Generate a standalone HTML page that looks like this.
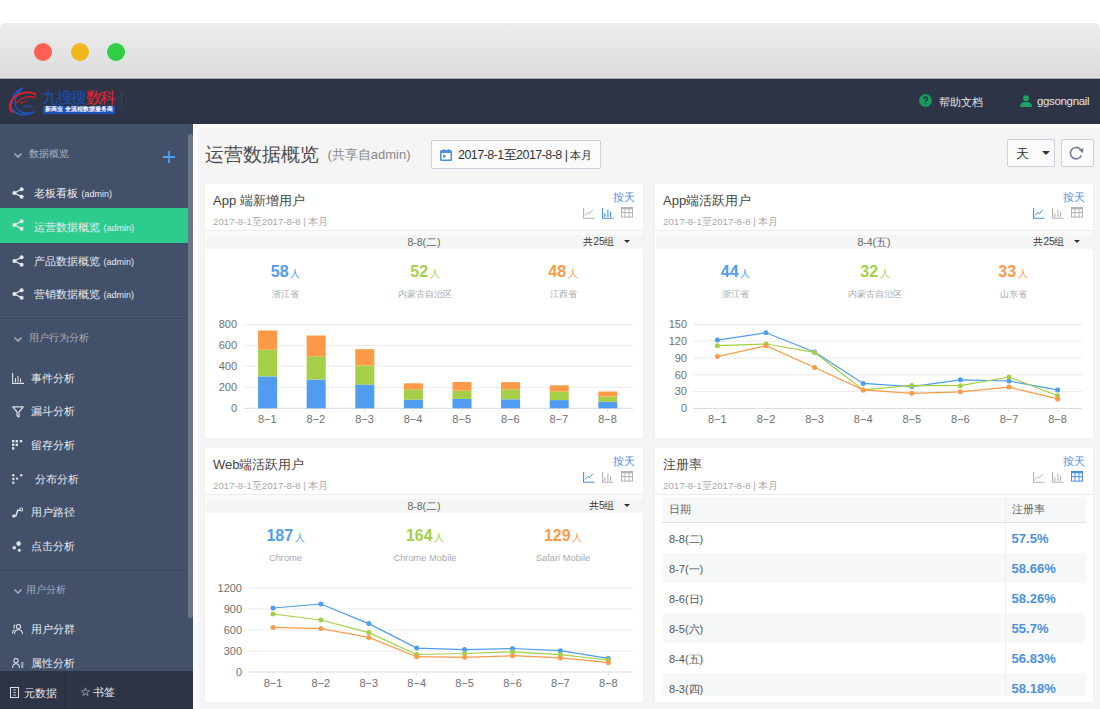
<!DOCTYPE html>
<html><head><meta charset="utf-8">
<style>
*{margin:0;padding:0;box-sizing:border-box}
html,body{width:1100px;height:709px;overflow:hidden;background:#fff;font-family:"Liberation Sans",sans-serif;position:relative}
.abs{position:absolute}
#titlebar{position:absolute;left:0;top:23px;width:1100px;height:56px;background:linear-gradient(#ededed,#dbdcdb calc(100% - 2px),#eeeeee calc(100% - 2px),#eeeeee calc(100% - 1px),#9a9ea6 calc(100% - 1px));border-radius:5px 5px 0 0}
.tl{position:absolute;top:43.3px;width:18px;height:18px;border-radius:50%}
#header{position:absolute;left:0;top:79px;width:1100px;height:44px;background:#2c3446}
#sidebar{position:absolute;left:0;top:123px;width:193px;height:586px;background:#435069;overflow:hidden}
#main{position:absolute;left:193px;top:123px;width:907px;height:586px;background:#f5f5f5;box-shadow:inset 5px 5px 0 #fbfbfb}
.sec{position:absolute;left:28.6px;font-size:9.5px;color:#a9b1c0;font-weight:500;line-height:12px}
.chev{position:absolute;left:13.5px;width:8px;height:5px}
.item{position:absolute;left:0;width:188px;height:35px;color:#e8ebf0;font-size:11px;line-height:35px;font-weight:500}
.item .t{position:absolute;left:34.4px;top:0;white-space:nowrap}
.item .t small{font-size:9px;margin-left:3px}
.item svg{position:absolute;left:12px;top:11px}
.item2 .t{left:31px}
.divider{position:absolute;left:0;width:188px;height:2px;border-top:1px solid #3d485e;background:#47546d}
.card{position:absolute;width:438px;height:254px;background:#fff;box-shadow:0 0 0 1px #f1f1f1}
.ctitle{position:absolute;font-size:13px;color:#444;line-height:16px;white-space:nowrap}
.csub{position:absolute;font-size:9.7px;color:#aaa;line-height:13px;white-space:nowrap}
.cline{position:absolute;width:438px;height:1px;background:#ececec}
.byday{position:absolute;font-size:11px;color:#4a90e2;line-height:14px;width:22px;text-align:right;white-space:nowrap}
.ic{position:absolute}
.band{position:absolute;width:437px;height:18px;background:linear-gradient(#fafafa 0,#fafafa 4px,#f5f5f5 4px)}
.bdate{position:absolute;width:438px;text-align:center;font-size:10.5px;color:#666;line-height:14px}
.bgrp{position:absolute;width:114px;text-align:right;font-size:10px;color:#3a3a3a;line-height:14px;letter-spacing:0px}
.caret{position:absolute;width:0;height:0;border-left:3px solid transparent;border-right:3px solid transparent;border-top:3px solid #333}
.stat{position:absolute;width:140px;text-align:center;line-height:18px;white-space:nowrap}
.stat b{font-size:16px;font-weight:bold}
.stat span{font-size:10px;margin-left:1.5px}
.slab{position:absolute;width:140px;text-align:center;font-size:9.3px;color:#aaa;line-height:12px;white-space:nowrap}
.chart{position:absolute;left:0;top:0;pointer-events:none}
.yl{font-family:"Liberation Sans",sans-serif;font-size:11px;fill:#707070}
.xl{font-family:"Liberation Sans",sans-serif;font-size:11px;fill:#707070}
.tbl{position:absolute;left:662px;top:496.5px;width:424px;height:199.5px;overflow:hidden}
.th{position:relative;height:26px;background:#f7f8fa;border-bottom:1px solid #dfe2e6;font-size:10.5px;color:#666;line-height:25px}
.tr{position:relative;height:30.2px;background:#fff;font-size:11px;color:#555;line-height:32px}
.tr.odd{background:#f7f8fa}
.c1{position:absolute;left:7px;top:0}
.c2{position:absolute;left:349.6px;top:0}
.th .c2{left:349.6px}
.tr .c2{color:#4a90e2;font-weight:bold;font-size:13px}
.vsep{position:absolute;left:1005px;top:496.5px;width:1px;height:199.5px;background:#eceef1}
</style></head><body>
<div id="titlebar"></div>
<div class="tl" style="left:34.2px;background:#fd5f57"></div>
<div class="tl" style="left:70.8px;background:#f2b71b"></div>
<div class="tl" style="left:107.2px;background:#2fce43"></div>

<div id="header">
  <svg class="abs" style="left:4px;top:5px" width="40" height="36" viewBox="0 0 40 36">
    <path d="M19.3 3.6 C11 8 5.5 16 7.5 23.5 C9.5 30.5 20 33 30.5 27.7" stroke="#2255c8" stroke-width="1.6" fill="none"/>
    <path d="M18 5.6 C12 10 9.5 18 12.5 24 C15 28.5 21 29.5 25 28.5" stroke="#2255c8" stroke-width="1.2" fill="none"/>
    <path d="M16.5 4.2 C10 8.5 7.5 15 8.5 20" stroke="#2255c8" stroke-width="0.9" fill="none"/>
    <path d="M32.5 10.7 C26 6.5 15 8 9 15 C4.5 20.5 4.5 25.5 9 28.5" stroke="#ee1c25" stroke-width="1.9" fill="none"/>
    <path d="M31.8 13.5 C25 11.5 17 13 12.5 19.5" stroke="#ee1c25" stroke-width="1.1" fill="none"/>
    <path d="M22.8 17.8 C20 17.5 17.5 18.5 16 19.5" stroke="#ee1c25" stroke-width="0.9" fill="none"/>
    <text x="19.5" y="23.8" font-size="3.6" fill="#2255c8" font-weight="bold" font-style="italic" font-family="Liberation Serif">DATA</text>
  </svg>
  <div class="abs" style="left:42px;top:10px;font-size:16px;line-height:18px;white-space:nowrap;letter-spacing:-1.5px;font-weight:500"><span style="color:#1a50b8">九搜搜</span><span style="color:#e5262d">数科</span></div>
  <div class="abs" style="left:43px;top:27px;width:72px;height:7.5px;background:#1a50b8;color:#fff;font-size:6px;line-height:7.5px;font-weight:bold;white-space:nowrap;overflow:hidden;padding-left:2px">新商业 全流程数据服务商</div>
  <div class="abs" style="left:121px;top:13px;width:1px;height:18px;background:#3a4255"></div>
  <svg class="abs" style="left:919px;top:14.6px" width="13" height="13" viewBox="0 0 13 13"><circle cx="6.5" cy="6.5" r="6.5" fill="#15995c"/><path d="M4.6 5 C4.6 3.6 5.5 3 6.5 3 C7.6 3 8.4 3.7 8.4 4.7 C8.4 5.8 7 6 6.7 7 V7.8" stroke="#2c3446" stroke-width="1.3" fill="none"/><circle cx="6.6" cy="9.6" r="0.8" fill="#2c3446"/></svg>
  <div class="abs" style="left:938.5px;top:15.5px;font-size:11px;line-height:14px;color:#e2e5ea;white-space:nowrap;font-weight:500">帮助文档</div>
  <svg class="abs" style="left:1020px;top:15.5px" width="12" height="12" viewBox="0 0 12 12"><circle cx="6" cy="3.2" r="3" fill="#1ea162"/><path d="M0 12 C0 8 2.5 7 6 7 C9.5 7 12 8 12 12 Z" fill="#1ea162"/></svg>
  <div class="abs" style="left:1037px;top:14.5px;font-size:11.5px;line-height:14px;color:#e2e5ea;white-space:nowrap;letter-spacing:-0.35px">ggsongnail</div>
</div>

<div id="sidebar">
  <!-- coordinates relative to top 123 -->
  <svg class="chev" style="top:30px" viewBox="0 0 8 5"><path d="M0.5 0.5L4 4L7.5 0.5" stroke="#a9b1c0" stroke-width="1.5" fill="none"/></svg>
  <div class="sec" style="top:25px">数据概览</div>
  <svg class="abs" style="left:163px;top:28px" width="12" height="12" viewBox="0 0 12 12"><path d="M6 0V12M0 6H12" stroke="#4aa0f5" stroke-width="1.8"/></svg>
  <div class="scroll abs" style="left:188px;top:11px;width:5px;height:484px;background:#6d7688;border-radius:2.5px"></div>
  <div class="item" style="top:53px;"><svg style="top:11px" width="12" height="12" viewBox="0 0 12 12"><path d="M9.5 2.2L2.5 6L9.5 9.8" stroke="#e6e9ee" stroke-width="1.3" fill="none"/><circle cx="9.6" cy="2.2" r="2" fill="#e6e9ee"/><circle cx="2.4" cy="6" r="2" fill="#e6e9ee"/><circle cx="9.6" cy="9.8" r="2" fill="#e6e9ee"/></svg><div class="t">老板看板<small>(admin)</small></div></div><div class="item" style="top:85px;background:#2ecb8f;"><svg style="top:11px" width="12" height="12" viewBox="0 0 12 12"><path d="M9.5 2.2L2.5 6L9.5 9.8" stroke="#e6e9ee" stroke-width="1.3" fill="none"/><circle cx="9.6" cy="2.2" r="2" fill="#e6e9ee"/><circle cx="2.4" cy="6" r="2" fill="#e6e9ee"/><circle cx="9.6" cy="9.8" r="2" fill="#e6e9ee"/></svg><div class="t" style="top:1.5px">运营数据概览<small>(admin)</small></div></div><div class="item" style="top:120.5px;"><svg style="top:11px" width="12" height="12" viewBox="0 0 12 12"><path d="M9.5 2.2L2.5 6L9.5 9.8" stroke="#e6e9ee" stroke-width="1.3" fill="none"/><circle cx="9.6" cy="2.2" r="2" fill="#e6e9ee"/><circle cx="2.4" cy="6" r="2" fill="#e6e9ee"/><circle cx="9.6" cy="9.8" r="2" fill="#e6e9ee"/></svg><div class="t">产品数据概览<small>(admin)</small></div></div><div class="item" style="top:154px;"><svg style="top:11px" width="12" height="12" viewBox="0 0 12 12"><path d="M9.5 2.2L2.5 6L9.5 9.8" stroke="#e6e9ee" stroke-width="1.3" fill="none"/><circle cx="9.6" cy="2.2" r="2" fill="#e6e9ee"/><circle cx="2.4" cy="6" r="2" fill="#e6e9ee"/><circle cx="9.6" cy="9.8" r="2" fill="#e6e9ee"/></svg><div class="t">营销数据概览<small>(admin)</small></div></div><div class="divider" style="top:194.5px"></div><svg class="chev" style="top:214px" viewBox="0 0 8 5"><path d="M0.5 0.5L4 4L7.5 0.5" stroke="#a9b1c0" stroke-width="1.5" fill="none"/></svg><div class="sec" style="top:209px">用户行为分析</div><div class="item item2" style="top:237.7px"><svg style="top:12px" width="12" height="11" viewBox="0 0 12 11"><path d="M0.6 0V10.4H12" stroke="#dde1e7" stroke-width="1.1" fill="none"/><path d="M3.5 5V9M6 3V9M8.5 5.5V9" stroke="#dde1e7" stroke-width="1" fill="none"/></svg><div class="t" style="left:31px">事件分析</div></div><div class="item item2" style="top:271px"><svg style="top:12px" width="12" height="12" viewBox="0 0 12 12"><path d="M0.8 0.8H11.2L7 6V11L5 9.8V6Z" stroke="#dde1e7" stroke-width="1.2" fill="none" stroke-linejoin="round"/></svg><div class="t" style="left:31px">漏斗分析</div></div><div class="item item2" style="top:304.8px"><svg style="top:12px" width="11" height="10" viewBox="0 0 11 10"><g fill="#dde1e7"><rect x="0" y="0" width="2.4" height="2.4"/><rect x="3.6" y="0" width="2.4" height="2.4"/><rect x="7.8" y="0" width="2.4" height="2.4"/><rect x="0" y="3.6" width="2.4" height="2.4"/><rect x="3.6" y="3.6" width="2.4" height="2.4"/><rect x="0" y="7.2" width="2.4" height="2.4"/></g></svg><div class="t" style="left:31px">留存分析</div></div><div class="item item2" style="top:338.7px"><svg style="top:12px" width="11" height="10" viewBox="0 0 11 10"><g fill="#dde1e7"><circle cx="1.3" cy="1.3" r="1.2"/><circle cx="9.2" cy="1.3" r="1.2"/><circle cx="1.3" cy="5" r="1.2"/><circle cx="5" cy="4.6" r="1.2"/><circle cx="1.3" cy="8.7" r="1.2"/></g></svg><div class="t" style="left:35px">分布分析</div></div><div class="item item2" style="top:372.4px"><svg style="top:12px" width="11" height="11" viewBox="0 0 11 11"><path d="M1.8 9H3.8L5.8 3.2H8.3" stroke="#dde1e7" stroke-width="1.5" fill="none"/><rect x="0.3" y="7.6" width="2.8" height="2.8" fill="#dde1e7"/><circle cx="9.3" cy="2.5" r="1.5" fill="none" stroke="#dde1e7" stroke-width="1.1"/></svg><div class="t" style="left:31px">用户路径</div></div><div class="item item2" style="top:405.7px"><svg style="top:12px" width="11" height="11" viewBox="0 0 11 11"><g fill="#dde1e7"><circle cx="6.6" cy="2.6" r="2.3"/><circle cx="2.2" cy="6.8" r="1.8"/><circle cx="7.3" cy="9.2" r="1.5"/></g></svg><div class="t" style="left:31px">点击分析</div></div><div class="divider" style="top:447px"></div><svg class="chev" style="top:466px" viewBox="0 0 8 5"><path d="M0.5 0.5L4 4L7.5 0.5" stroke="#a9b1c0" stroke-width="1.5" fill="none"/></svg><div class="sec" style="top:461px;left:25.5px">用户分析</div><div class="item item2" style="top:489.2px"><svg style="top:12px" width="11" height="10" viewBox="0 0 11 10"><g stroke="#dde1e7" stroke-width="1.1" fill="none"><circle cx="6.5" cy="2.6" r="2.1"/><path d="M2.5 10C2.5 7 4.5 5.7 6.5 5.7S10.5 7 10.5 10"/><path d="M3.2 0.8A2 2 0 0 0 2.6 4.3M0.5 9.5C0.5 7 1.3 6.1 2.3 5.7"/></g></svg><div class="t" style="left:31px">用户分群</div></div><div class="item item2" style="top:522.8px"><svg style="top:12px" width="12" height="10" viewBox="0 0 12 10"><g stroke="#dde1e7" stroke-width="1.1" fill="none"><circle cx="4" cy="2.6" r="2.1"/><path d="M0.6 10C0.6 7 2 5.7 4 5.7S7.4 7 7.4 10"/><path d="M9 5H11.5M9 7H11.5M9 9H11.5"/></g></svg><div class="t" style="left:31px">属性分析</div></div>
</div>
<div class="abs" style="left:0;top:671px;width:193px;height:38px;background:#2d3446"></div>
<svg class="abs" style="left:10px;top:687px" width="9" height="11" viewBox="0 0 9 11"><rect x="0.5" y="0.5" width="8" height="10" fill="none" stroke="#dde1e7" stroke-width="1"/><path d="M3 3H6M3 5.5H6M3 8H6" stroke="#dde1e7" stroke-width="0.8"/></svg>
<div class="abs" style="left:23.5px;top:685.5px;font-size:11px;font-weight:500;line-height:14px;color:#e6e9ee;white-space:nowrap">元数据</div>
<div class="abs" style="left:65px;top:671px;width:1px;height:38px;background:#262d3c"></div>
<div class="abs" style="left:80px;top:685px;font-size:12px;line-height:14px;color:#e6e9ee;white-space:nowrap;font-weight:500">☆<span style="font-size:11px;margin-left:2px">书签</span></div>

<div id="main"></div>
<div class="abs" style="left:0;top:123px;width:1100px;height:1px;background:#29313f"></div>
<div class="abs" style="left:0;top:124px;width:188px;height:2px;background:#46536e"></div>
<div class="abs" style="left:205px;top:143.5px;font-size:19px;line-height:22px;color:#4d4d4d;white-space:nowrap">运营数据概览</div>
<div class="abs" style="left:327.5px;top:146.5px;font-size:13px;line-height:16px;color:#888;white-space:nowrap">(共享自admin)</div>
<div class="abs" style="left:431px;top:140px;width:170px;height:29px;border:1px solid #c9d1dc;border-radius:2px;background:#fbfbfc"></div>
<svg class="abs" style="left:440px;top:149px" width="12" height="12" viewBox="0 0 12 12"><rect x="0" y="1" width="12" height="11" rx="1.5" fill="#4a90e2"/><rect x="1.5" y="4" width="9" height="6.5" fill="#fff"/><rect x="3" y="6" width="2.5" height="2.5" fill="#4a90e2"/><rect x="3" y="0" width="1.3" height="2.5" fill="#4a90e2"/><rect x="7.7" y="0" width="1.3" height="2.5" fill="#4a90e2"/></svg>
<div class="abs" style="left:458px;top:147.5px;font-size:12.5px;line-height:15px;color:#333;white-space:nowrap;letter-spacing:-0.55px">2017-8-1至2017-8-8 | <span style="font-size:11.2px;letter-spacing:-0.2px">本月</span></div>
<div class="abs" style="left:1007px;top:139px;width:48px;height:28px;border:1px solid #c9d1dc;border-radius:2px;background:#fbfbfc"></div>
<div class="abs" style="left:1016px;top:147px;font-size:12.5px;line-height:15px;color:#333">天</div>
<div class="abs" style="left:1042px;top:151px;width:0;height:0;border-left:4px solid transparent;border-right:4px solid transparent;border-top:4px solid #333"></div>
<div class="abs" style="left:1061px;top:139px;width:33px;height:28px;border:1px solid #c9d1dc;border-radius:2px;background:#fbfbfc"></div>
<svg class="abs" style="left:1069px;top:145px" width="16" height="15" viewBox="0 0 16 15"><path d="M12.3 10.6 A5.7 5.7 0 1 1 11.2 4.1" stroke="#6f7e92" stroke-width="1.6" fill="none"/><path d="M9.8 4.6L14.6 3.2L13.6 8.2Z" fill="#6f7e92"/></svg>

<div class="card" style="left:205px;top:184px"></div><div class="ctitle" style="left:213px;top:193px">App 端新增用户</div><div class="csub" style="left:213px;top:215px">2017-8-1至2017-8-8 | 本月</div><div class="cline" style="left:205px;top:230px"></div><div class="byday" style="left:613px;top:189.5px">按天</div><svg class="ic" style="left:583.0px;top:207.5px" width="12" height="11" viewBox="0 0 12 11"><path d="M0.6 0V10.2H11.5" stroke="#b3b3b3" fill="none" stroke-width="1.1"/><path d="M2.2 7.4L4.7 4.4L6.3 5.8L9.8 1.8" stroke="#b3b3b3" fill="none" stroke-width="1"/></svg><svg class="ic" style="left:602.0px;top:207.5px" width="12" height="11" viewBox="0 0 12 11"><path d="M0.6 0V10.2H11.5" stroke="#4a90e2" fill="none" stroke-width="1.1"/><path d="M2.8 5.3V9.2M5.9 1.5V9.2M8.6 3.7V9.2" stroke="#4a90e2" fill="none" stroke-width="1.1"/></svg><svg class="ic" style="left:621.3px;top:207.4px" width="12" height="11" viewBox="0 0 12 11"><rect x="0.5" y="0.5" width="11" height="9.6" stroke="#b3b3b3" fill="none" stroke-width="1"/><rect x="0" y="0" width="12" height="2.3" fill="#b3b3b3"/><path d="M0.5 5.6H11.5M4 0.5V10.5M8 0.5V10.5" stroke="#b3b3b3" fill="none" stroke-width="1"/></svg><div class="band" style="left:206px;top:231px"></div><div class="bdate" style="left:205px;top:235px">8-8(二)</div><div class="bgrp" style="left:500.5px;top:235px">共25组</div><div class="caret" style="left:624px;top:240px"></div><div class="stat" style="left:215.5px;top:262.5px;color:#4f9cf0"><b>58</b><span>人</span></div><div class="slab" style="left:215.5px;top:288px">浙江省</div><div class="stat" style="left:355px;top:262.5px;color:#a5cf47"><b>52</b><span>人</span></div><div class="slab" style="left:355px;top:288px">内蒙古自治区</div><div class="stat" style="left:493px;top:262.5px;color:#fc9a48"><b>48</b><span>人</span></div><div class="slab" style="left:493px;top:288px">江西省</div><svg class="chart" width="1100" height="709" viewBox="0 0 1100 709"><line x1="244" x2="633" y1="408.3" y2="408.3" stroke="#d9d9d9" stroke-width="1"/><text x="237" y="412.1" text-anchor="end" class="yl">0</text><line x1="244" x2="633" y1="387.4" y2="387.4" stroke="#ececec" stroke-width="1"/><text x="237" y="391.2" text-anchor="end" class="yl">200</text><line x1="244" x2="633" y1="366.4" y2="366.4" stroke="#ececec" stroke-width="1"/><text x="237" y="370.2" text-anchor="end" class="yl">400</text><line x1="244" x2="633" y1="345.4" y2="345.4" stroke="#ececec" stroke-width="1"/><text x="237" y="349.2" text-anchor="end" class="yl">600</text><line x1="244" x2="633" y1="324.5" y2="324.5" stroke="#ececec" stroke-width="1"/><text x="237" y="328.3" text-anchor="end" class="yl">800</text><line x1="267.3" x2="267.3" y1="408.3" y2="412.3" stroke="#e8e8e8" stroke-width="1"/><text x="267.3" y="423.3" text-anchor="middle" class="xl">8−1</text><line x1="315.9" x2="315.9" y1="408.3" y2="412.3" stroke="#e8e8e8" stroke-width="1"/><text x="315.9" y="423.3" text-anchor="middle" class="xl">8−2</text><line x1="364.5" x2="364.5" y1="408.3" y2="412.3" stroke="#e8e8e8" stroke-width="1"/><text x="364.5" y="423.3" text-anchor="middle" class="xl">8−3</text><line x1="413.1" x2="413.1" y1="408.3" y2="412.3" stroke="#e8e8e8" stroke-width="1"/><text x="413.1" y="423.3" text-anchor="middle" class="xl">8−4</text><line x1="461.7" x2="461.7" y1="408.3" y2="412.3" stroke="#e8e8e8" stroke-width="1"/><text x="461.7" y="423.3" text-anchor="middle" class="xl">8−5</text><line x1="510.3" x2="510.3" y1="408.3" y2="412.3" stroke="#e8e8e8" stroke-width="1"/><text x="510.3" y="423.3" text-anchor="middle" class="xl">8−6</text><line x1="558.9" x2="558.9" y1="408.3" y2="412.3" stroke="#e8e8e8" stroke-width="1"/><text x="558.9" y="423.3" text-anchor="middle" class="xl">8−7</text><line x1="607.5" x2="607.5" y1="408.3" y2="412.3" stroke="#e8e8e8" stroke-width="1"/><text x="607.5" y="423.3" text-anchor="middle" class="xl">8−8</text><rect x="258.1" y="376.4" width="19" height="31.9" fill="#4f9cf0"/><rect x="258.1" y="349.6" width="19" height="26.7" fill="#a5cf47"/><rect x="258.1" y="330.5" width="19" height="19.2" fill="#fc9a48"/><rect x="306.7" y="379.5" width="19" height="28.8" fill="#4f9cf0"/><rect x="306.7" y="356.4" width="19" height="23.0" fill="#a5cf47"/><rect x="306.7" y="335.5" width="19" height="21.0" fill="#fc9a48"/><rect x="355.3" y="384.5" width="19" height="23.8" fill="#4f9cf0"/><rect x="355.3" y="365.7" width="19" height="18.9" fill="#a5cf47"/><rect x="355.3" y="349.2" width="19" height="16.4" fill="#fc9a48"/><rect x="403.9" y="399.7" width="19" height="8.6" fill="#4f9cf0"/><rect x="403.9" y="389.4" width="19" height="10.3" fill="#a5cf47"/><rect x="403.9" y="383.3" width="19" height="6.2" fill="#fc9a48"/><rect x="452.5" y="398.9" width="19" height="9.4" fill="#4f9cf0"/><rect x="452.5" y="390.7" width="19" height="8.2" fill="#a5cf47"/><rect x="452.5" y="382.0" width="19" height="8.7" fill="#fc9a48"/><rect x="501.1" y="399.3" width="19" height="9.0" fill="#4f9cf0"/><rect x="501.1" y="389.4" width="19" height="9.8" fill="#a5cf47"/><rect x="501.1" y="382.1" width="19" height="7.3" fill="#fc9a48"/><rect x="549.7" y="400.1" width="19" height="8.2" fill="#4f9cf0"/><rect x="549.7" y="391.5" width="19" height="8.6" fill="#a5cf47"/><rect x="549.7" y="385.3" width="19" height="6.3" fill="#fc9a48"/><rect x="598.3" y="401.8" width="19" height="6.5" fill="#4f9cf0"/><rect x="598.3" y="396.6" width="19" height="5.2" fill="#a5cf47"/><rect x="598.3" y="391.5" width="19" height="5.0" fill="#fc9a48"/></svg><div class="card" style="left:655px;top:184px"></div><div class="ctitle" style="left:663px;top:193px">App端活跃用户</div><div class="csub" style="left:663px;top:215px">2017-8-1至2017-8-8 | 本月</div><div class="cline" style="left:655px;top:230px"></div><div class="byday" style="left:1063px;top:189.5px">按天</div><svg class="ic" style="left:1033.0px;top:207.5px" width="12" height="11" viewBox="0 0 12 11"><path d="M0.6 0V10.2H11.5" stroke="#4a90e2" fill="none" stroke-width="1.1"/><path d="M2.2 7.4L4.7 4.4L6.3 5.8L9.8 1.8" stroke="#4a90e2" fill="none" stroke-width="1"/></svg><svg class="ic" style="left:1052.0px;top:207.5px" width="12" height="11" viewBox="0 0 12 11"><path d="M0.6 0V10.2H11.5" stroke="#b3b3b3" fill="none" stroke-width="1.1"/><path d="M2.8 5.3V9.2M5.9 1.5V9.2M8.6 3.7V9.2" stroke="#b3b3b3" fill="none" stroke-width="1.1"/></svg><svg class="ic" style="left:1071.3px;top:207.4px" width="12" height="11" viewBox="0 0 12 11"><rect x="0.5" y="0.5" width="11" height="9.6" stroke="#b3b3b3" fill="none" stroke-width="1"/><rect x="0" y="0" width="12" height="2.3" fill="#b3b3b3"/><path d="M0.5 5.6H11.5M4 0.5V10.5M8 0.5V10.5" stroke="#b3b3b3" fill="none" stroke-width="1"/></svg><div class="band" style="left:656px;top:231px"></div><div class="bdate" style="left:655px;top:235px">8-4(五)</div><div class="bgrp" style="left:950.5px;top:235px">共25组</div><div class="caret" style="left:1074px;top:240px"></div><div class="stat" style="left:665.5px;top:262.5px;color:#4f9cf0"><b>44</b><span>人</span></div><div class="slab" style="left:665.5px;top:288px">浙江省</div><div class="stat" style="left:805px;top:262.5px;color:#a5cf47"><b>32</b><span>人</span></div><div class="slab" style="left:805px;top:288px">内蒙古自治区</div><div class="stat" style="left:943px;top:262.5px;color:#fc9a48"><b>33</b><span>人</span></div><div class="slab" style="left:943px;top:288px">山东省</div><svg class="chart" width="1100" height="709" viewBox="0 0 1100 709"><line x1="693" x2="1082" y1="408.4" y2="408.4" stroke="#d9d9d9" stroke-width="1"/><text x="687" y="412.2" text-anchor="end" class="yl">0</text><line x1="693" x2="1082" y1="391.6" y2="391.6" stroke="#ececec" stroke-width="1"/><text x="687" y="395.4" text-anchor="end" class="yl">30</text><line x1="693" x2="1082" y1="374.8" y2="374.8" stroke="#ececec" stroke-width="1"/><text x="687" y="378.6" text-anchor="end" class="yl">60</text><line x1="693" x2="1082" y1="358.0" y2="358.0" stroke="#ececec" stroke-width="1"/><text x="687" y="361.8" text-anchor="end" class="yl">90</text><line x1="693" x2="1082" y1="341.2" y2="341.2" stroke="#ececec" stroke-width="1"/><text x="687" y="345.0" text-anchor="end" class="yl">120</text><line x1="693" x2="1082" y1="324.4" y2="324.4" stroke="#ececec" stroke-width="1"/><text x="687" y="328.2" text-anchor="end" class="yl">150</text><line x1="717.4" x2="717.4" y1="408.4" y2="412.4" stroke="#e8e8e8" stroke-width="1"/><text x="717.4" y="423.4" text-anchor="middle" class="xl">8−1</text><line x1="766.0" x2="766.0" y1="408.4" y2="412.4" stroke="#e8e8e8" stroke-width="1"/><text x="766.0" y="423.4" text-anchor="middle" class="xl">8−2</text><line x1="814.6" x2="814.6" y1="408.4" y2="412.4" stroke="#e8e8e8" stroke-width="1"/><text x="814.6" y="423.4" text-anchor="middle" class="xl">8−3</text><line x1="863.2" x2="863.2" y1="408.4" y2="412.4" stroke="#e8e8e8" stroke-width="1"/><text x="863.2" y="423.4" text-anchor="middle" class="xl">8−4</text><line x1="911.8" x2="911.8" y1="408.4" y2="412.4" stroke="#e8e8e8" stroke-width="1"/><text x="911.8" y="423.4" text-anchor="middle" class="xl">8−5</text><line x1="960.4" x2="960.4" y1="408.4" y2="412.4" stroke="#e8e8e8" stroke-width="1"/><text x="960.4" y="423.4" text-anchor="middle" class="xl">8−6</text><line x1="1009.0" x2="1009.0" y1="408.4" y2="412.4" stroke="#e8e8e8" stroke-width="1"/><text x="1009.0" y="423.4" text-anchor="middle" class="xl">8−7</text><line x1="1057.6" x2="1057.6" y1="408.4" y2="412.4" stroke="#e8e8e8" stroke-width="1"/><text x="1057.6" y="423.4" text-anchor="middle" class="xl">8−8</text><polyline points="717.4,340.1 766.0,332.8 814.6,352.0 863.2,383.4 911.8,386.6 960.4,379.8 1009.0,381.0 1057.6,389.9" fill="none" stroke="#4f9cf0" stroke-width="1.2"/><circle cx="717.4" cy="340.1" r="2.5" fill="#4f9cf0"/><circle cx="766.0" cy="332.8" r="2.5" fill="#4f9cf0"/><circle cx="814.6" cy="352.0" r="2.5" fill="#4f9cf0"/><circle cx="863.2" cy="383.4" r="2.5" fill="#4f9cf0"/><circle cx="911.8" cy="386.6" r="2.5" fill="#4f9cf0"/><circle cx="960.4" cy="379.8" r="2.5" fill="#4f9cf0"/><circle cx="1009.0" cy="381.0" r="2.5" fill="#4f9cf0"/><circle cx="1057.6" cy="389.9" r="2.5" fill="#4f9cf0"/><polyline points="717.4,345.7 766.0,344.0 814.6,352.4 863.2,389.9 911.8,385.4 960.4,385.7 1009.0,377.0 1057.6,395.8" fill="none" stroke="#a5cf47" stroke-width="1.2"/><circle cx="717.4" cy="345.7" r="2.5" fill="#a5cf47"/><circle cx="766.0" cy="344.0" r="2.5" fill="#a5cf47"/><circle cx="814.6" cy="352.4" r="2.5" fill="#a5cf47"/><circle cx="863.2" cy="389.9" r="2.5" fill="#a5cf47"/><circle cx="911.8" cy="385.4" r="2.5" fill="#a5cf47"/><circle cx="960.4" cy="385.7" r="2.5" fill="#a5cf47"/><circle cx="1009.0" cy="377.0" r="2.5" fill="#a5cf47"/><circle cx="1057.6" cy="395.8" r="2.5" fill="#a5cf47"/><polyline points="717.4,356.6 766.0,345.7 814.6,367.5 863.2,389.9 911.8,393.3 960.4,391.8 1009.0,387.1 1057.6,398.9" fill="none" stroke="#fc9a48" stroke-width="1.2"/><circle cx="717.4" cy="356.6" r="2.5" fill="#fc9a48"/><circle cx="766.0" cy="345.7" r="2.5" fill="#fc9a48"/><circle cx="814.6" cy="367.5" r="2.5" fill="#fc9a48"/><circle cx="863.2" cy="389.9" r="2.5" fill="#fc9a48"/><circle cx="911.8" cy="393.3" r="2.5" fill="#fc9a48"/><circle cx="960.4" cy="391.8" r="2.5" fill="#fc9a48"/><circle cx="1009.0" cy="387.1" r="2.5" fill="#fc9a48"/><circle cx="1057.6" cy="398.9" r="2.5" fill="#fc9a48"/></svg><div class="card" style="left:205px;top:448px"></div><div class="ctitle" style="left:213px;top:457px">Web端活跃用户</div><div class="csub" style="left:213px;top:479px">2017-8-1至2017-8-8 | 本月</div><div class="cline" style="left:205px;top:494px"></div><div class="byday" style="left:613px;top:453.5px">按天</div><svg class="ic" style="left:583.0px;top:471.5px" width="12" height="11" viewBox="0 0 12 11"><path d="M0.6 0V10.2H11.5" stroke="#4a90e2" fill="none" stroke-width="1.1"/><path d="M2.2 7.4L4.7 4.4L6.3 5.8L9.8 1.8" stroke="#4a90e2" fill="none" stroke-width="1"/></svg><svg class="ic" style="left:602.0px;top:471.5px" width="12" height="11" viewBox="0 0 12 11"><path d="M0.6 0V10.2H11.5" stroke="#b3b3b3" fill="none" stroke-width="1.1"/><path d="M2.8 5.3V9.2M5.9 1.5V9.2M8.6 3.7V9.2" stroke="#b3b3b3" fill="none" stroke-width="1.1"/></svg><svg class="ic" style="left:621.3px;top:471.4px" width="12" height="11" viewBox="0 0 12 11"><rect x="0.5" y="0.5" width="11" height="9.6" stroke="#b3b3b3" fill="none" stroke-width="1"/><rect x="0" y="0" width="12" height="2.3" fill="#b3b3b3"/><path d="M0.5 5.6H11.5M4 0.5V10.5M8 0.5V10.5" stroke="#b3b3b3" fill="none" stroke-width="1"/></svg><div class="band" style="left:206px;top:495px"></div><div class="bdate" style="left:205px;top:499px">8-8(二)</div><div class="bgrp" style="left:500.5px;top:499px">共5组</div><div class="caret" style="left:624px;top:504px"></div><div class="stat" style="left:215.5px;top:526.5px;color:#4f9cf0"><b>187</b><span>人</span></div><div class="slab" style="left:215.5px;top:552px">Chrome</div><div class="stat" style="left:355px;top:526.5px;color:#a5cf47"><b>164</b><span>人</span></div><div class="slab" style="left:355px;top:552px">Chrome Mobile</div><div class="stat" style="left:493px;top:526.5px;color:#fc9a48"><b>129</b><span>人</span></div><div class="slab" style="left:493px;top:552px">Safari Mobile</div><svg class="chart" width="1100" height="709" viewBox="0 0 1100 709"><line x1="248" x2="633" y1="672.0" y2="672.0" stroke="#d9d9d9" stroke-width="1"/><text x="242" y="675.8" text-anchor="end" class="yl">0</text><line x1="248" x2="633" y1="651.0" y2="651.0" stroke="#ececec" stroke-width="1"/><text x="242" y="654.8" text-anchor="end" class="yl">300</text><line x1="248" x2="633" y1="630.0" y2="630.0" stroke="#ececec" stroke-width="1"/><text x="242" y="633.8" text-anchor="end" class="yl">600</text><line x1="248" x2="633" y1="609.0" y2="609.0" stroke="#ececec" stroke-width="1"/><text x="242" y="612.8" text-anchor="end" class="yl">900</text><line x1="248" x2="633" y1="588.0" y2="588.0" stroke="#ececec" stroke-width="1"/><text x="242" y="591.8" text-anchor="end" class="yl">1200</text><line x1="273.0" x2="273.0" y1="672" y2="676" stroke="#e8e8e8" stroke-width="1"/><text x="273.0" y="687.0" text-anchor="middle" class="xl">8−1</text><line x1="320.9" x2="320.9" y1="672" y2="676" stroke="#e8e8e8" stroke-width="1"/><text x="320.9" y="687.0" text-anchor="middle" class="xl">8−2</text><line x1="368.8" x2="368.8" y1="672" y2="676" stroke="#e8e8e8" stroke-width="1"/><text x="368.8" y="687.0" text-anchor="middle" class="xl">8−3</text><line x1="416.7" x2="416.7" y1="672" y2="676" stroke="#e8e8e8" stroke-width="1"/><text x="416.7" y="687.0" text-anchor="middle" class="xl">8−4</text><line x1="464.6" x2="464.6" y1="672" y2="676" stroke="#e8e8e8" stroke-width="1"/><text x="464.6" y="687.0" text-anchor="middle" class="xl">8−5</text><line x1="512.5" x2="512.5" y1="672" y2="676" stroke="#e8e8e8" stroke-width="1"/><text x="512.5" y="687.0" text-anchor="middle" class="xl">8−6</text><line x1="560.4" x2="560.4" y1="672" y2="676" stroke="#e8e8e8" stroke-width="1"/><text x="560.4" y="687.0" text-anchor="middle" class="xl">8−7</text><line x1="608.3" x2="608.3" y1="672" y2="676" stroke="#e8e8e8" stroke-width="1"/><text x="608.3" y="687.0" text-anchor="middle" class="xl">8−8</text><polyline points="273.0,608.0 320.9,604.0 368.8,623.6 416.7,648.1 464.6,649.6 512.5,648.5 560.4,650.7 608.3,658.4" fill="none" stroke="#4f9cf0" stroke-width="1.2"/><circle cx="273.0" cy="608.0" r="2.5" fill="#4f9cf0"/><circle cx="320.9" cy="604.0" r="2.5" fill="#4f9cf0"/><circle cx="368.8" cy="623.6" r="2.5" fill="#4f9cf0"/><circle cx="416.7" cy="648.1" r="2.5" fill="#4f9cf0"/><circle cx="464.6" cy="649.6" r="2.5" fill="#4f9cf0"/><circle cx="512.5" cy="648.5" r="2.5" fill="#4f9cf0"/><circle cx="560.4" cy="650.7" r="2.5" fill="#4f9cf0"/><circle cx="608.3" cy="658.4" r="2.5" fill="#4f9cf0"/><polyline points="273.0,614.0 320.9,620.0 368.8,632.6 416.7,654.5 464.6,653.5 512.5,651.8 560.4,654.6 608.3,660.0" fill="none" stroke="#a5cf47" stroke-width="1.2"/><circle cx="273.0" cy="614.0" r="2.5" fill="#a5cf47"/><circle cx="320.9" cy="620.0" r="2.5" fill="#a5cf47"/><circle cx="368.8" cy="632.6" r="2.5" fill="#a5cf47"/><circle cx="416.7" cy="654.5" r="2.5" fill="#a5cf47"/><circle cx="464.6" cy="653.5" r="2.5" fill="#a5cf47"/><circle cx="512.5" cy="651.8" r="2.5" fill="#a5cf47"/><circle cx="560.4" cy="654.6" r="2.5" fill="#a5cf47"/><circle cx="608.3" cy="660.0" r="2.5" fill="#a5cf47"/><polyline points="273.0,627.4 320.9,628.6 368.8,637.4 416.7,656.7 464.6,657.3 512.5,655.7 560.4,657.9 608.3,662.7" fill="none" stroke="#fc9a48" stroke-width="1.2"/><circle cx="273.0" cy="627.4" r="2.5" fill="#fc9a48"/><circle cx="320.9" cy="628.6" r="2.5" fill="#fc9a48"/><circle cx="368.8" cy="637.4" r="2.5" fill="#fc9a48"/><circle cx="416.7" cy="656.7" r="2.5" fill="#fc9a48"/><circle cx="464.6" cy="657.3" r="2.5" fill="#fc9a48"/><circle cx="512.5" cy="655.7" r="2.5" fill="#fc9a48"/><circle cx="560.4" cy="657.9" r="2.5" fill="#fc9a48"/><circle cx="608.3" cy="662.7" r="2.5" fill="#fc9a48"/></svg><div class="card" style="left:655px;top:448px"></div><div class="ctitle" style="left:663px;top:457px">注册率</div><div class="csub" style="left:663px;top:479px">2017-8-1至2017-8-8 | 本月</div><div class="cline" style="left:655px;top:494px"></div><div class="byday" style="left:1063px;top:453.5px">按天</div><svg class="ic" style="left:1033.0px;top:471.5px" width="12" height="11" viewBox="0 0 12 11"><path d="M0.6 0V10.2H11.5" stroke="#b3b3b3" fill="none" stroke-width="1.1"/><path d="M2.2 7.4L4.7 4.4L6.3 5.8L9.8 1.8" stroke="#b3b3b3" fill="none" stroke-width="1"/></svg><svg class="ic" style="left:1052.0px;top:471.5px" width="12" height="11" viewBox="0 0 12 11"><path d="M0.6 0V10.2H11.5" stroke="#b3b3b3" fill="none" stroke-width="1.1"/><path d="M2.8 5.3V9.2M5.9 1.5V9.2M8.6 3.7V9.2" stroke="#b3b3b3" fill="none" stroke-width="1.1"/></svg><svg class="ic" style="left:1071.3px;top:471.4px" width="12" height="11" viewBox="0 0 12 11"><rect x="0.5" y="0.5" width="11" height="9.6" stroke="#4a90e2" fill="none" stroke-width="1"/><rect x="0" y="0" width="12" height="2.3" fill="#4a90e2"/><path d="M0.5 5.6H11.5M4 0.5V10.5M8 0.5V10.5" stroke="#4a90e2" fill="none" stroke-width="1"/></svg><div class="tbl"><div class="th"><div class="c1">日期</div><div class="c2">注册率</div></div><div class="tr"><div class="c1">8-8(二)</div><div class="c2">57.5%</div></div><div class="tr odd"><div class="c1">8-7(一)</div><div class="c2">58.66%</div></div><div class="tr"><div class="c1">8-6(日)</div><div class="c2">58.26%</div></div><div class="tr odd"><div class="c1">8-5(六)</div><div class="c2">55.7%</div></div><div class="tr"><div class="c1">8-4(五)</div><div class="c2">56.83%</div></div><div class="tr odd"><div class="c1">8-3(四)</div><div class="c2">58.18%</div></div></div>
<div class="vsep"></div>
</body></html>
